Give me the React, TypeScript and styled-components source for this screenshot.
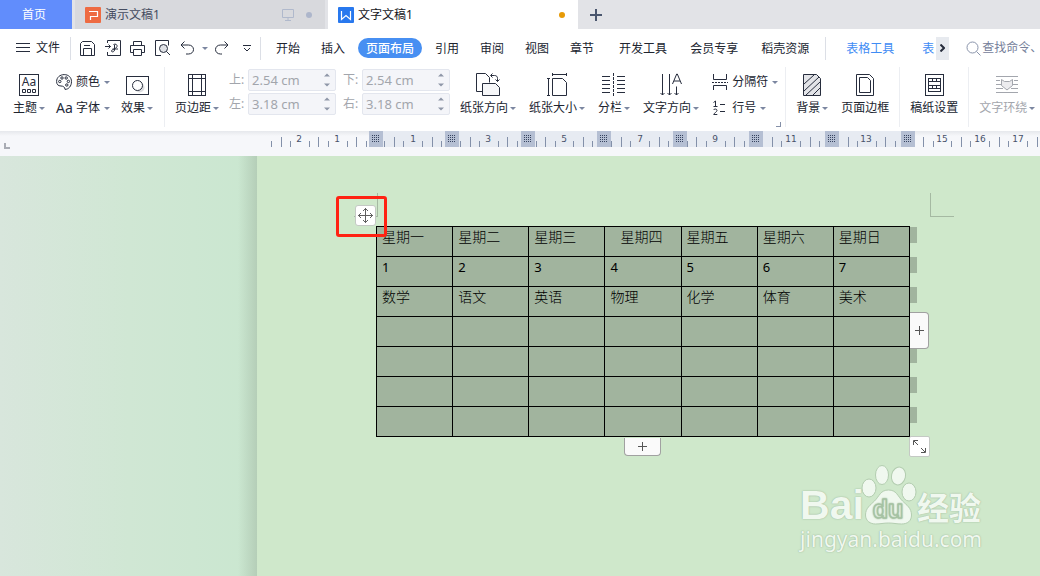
import React from "react";
import styled, { createGlobalStyle, css } from "styled-components";

const ink = "#272d3d";
const GlobalStyle = createGlobalStyle`
  * { box-sizing: border-box; }
  html, body, #root { height: 100%; }
  body {
    margin: 0;
    overflow: hidden;
    font: 12px/16px "Noto Sans", "Noto Sans CJK SC", sans-serif;
    color: #20242f;
    background: #cfe8cb;
  }
  button { border: 0; padding: 0; margin: 0; background: none; font: inherit; color: inherit; cursor: pointer; }
  svg { display: block; flex: none; }
`;

const Shell = styled.div`
  display: flex;
  flex-direction: column;
  min-height: 100%;
  overflow: hidden;
`;

/* ---------- tabs ---------- */
const TabBar = styled.header`
  display: flex;
  height: 29px;
  gap: 3px;
  background: #e2e3e7;
`;
const HomeTab = styled.button`
  width: 72px;
  flex: none;
  background: #618dfc;
  color: #fff;
  padding-right: 4px;
`;
const DocTab = styled.button<{ $active?: boolean }>`
  display: flex;
  align-items: center;
  gap: 4px;
  width: 250px;
  padding: 0 12px 0 10px;
  background: ${(p) => (p.$active ? "#fff" : "#d8d9dd")};
  color: ${(p) => (p.$active ? "#14161c" : "#454c60")};
`;
const TabTitle = styled.span`
  flex: 1;
  text-align: left;
`;
const Dot = styled.span<{ $color: string }>`
  width: 6px;
  height: 6px;
  margin-left: 8px;
  margin-right: 1px;
  border-radius: 50%;
  background: ${(p) => p.$color};
`;
const NewTab = styled.button`
  display: grid;
  place-items: center;
  width: 30px;
`;

/* ---------- menu ---------- */
const MenuBar = styled.nav`
  display: flex;
  align-items: center;
  height: 38px;
  background: #fff;
  white-space: nowrap;
`;
const FileButton = styled.button`
  display: flex;
  align-items: center;
  gap: 6px;
  width: 70px;
  flex: none;
  padding-left: 16px;
`;
const Bar = styled.span`
  flex: none;
  width: 1px;
  height: 23px;
  background: #dcdfe6;
`;
const QuickTools = styled.div`
  display: flex;
  flex: none;
  width: 189px;
  padding-left: 4px;
`;
const QuickButton = styled.button<{ $narrow?: boolean }>`
  display: grid;
  place-items: center;
  width: ${(p) => (p.$narrow ? "9px" : "25px")};
  height: 24px;
`;
const MenuGroup = styled.div<{ $gap: number; $left: number; $clip?: boolean }>`
  display: flex;
  flex: none;
  gap: ${(p) => p.$gap}px;
  margin-left: ${(p) => p.$left}px;
  ${(p) =>
    p.$clip &&
    css`
      width: 98px;
      overflow: hidden;
    `}
`;
const MenuItem = styled.button<{ $on?: boolean; $blue?: boolean }>`
  flex: none;
  height: 20px;
  padding: 1px 8px 0;
  border-radius: 10px;
  line-height: 19px;
  color: ${(p) => (p.$on ? "#fff" : p.$blue ? "#3f8cf4" : "#20242f")};
  background: ${(p) => (p.$on ? "#478ff2" : "none")};
  font-weight: ${(p) => (p.$on ? 500 : 400)};
`;
const ScrollNext = styled.button`
  display: grid;
  place-items: center;
  flex: none;
  width: 13px;
  height: 23px;
  background: #e7eaef;
`;
const Search = styled.label`
  display: flex;
  flex: 1;
  min-width: 0;
  align-items: center;
  margin-left: 17px;
  gap: 1px;
`;
const SearchInput = styled.input`
  flex: 1;
  min-width: 0;
  width: 20px;
  padding: 0;
  border: 0;
  outline: 0;
  font: inherit;
  background: none;
  &::placeholder { color: #75809a; opacity: 1; }
`;

/* ---------- ribbon ---------- */
const Ribbon = styled.section`
  display: flex;
  height: 64px;
  background: #fff;
  white-space: nowrap;
  overflow: hidden;
`;
const Group = styled.div<{ $gap?: number; $pad?: string }>`
  position: relative;
  display: flex;
  flex: none;
  height: 60px;
  gap: ${(p) => p.$gap ?? 13}px;
  padding: ${(p) => p.$pad ?? "0 10px"};
  border-right: 1px solid #eceef2;
`;
const Tool = styled.button<{ $dim?: boolean }>`
  display: flex;
  flex: none;
  flex-direction: column;
  align-items: center;
  height: 52px;
  padding-top: 3px;
  color: ${(p) => (p.$dim ? "#a3a6ad" : "inherit")};
`;
const ToolIcon = styled.span`
  display: grid;
  place-items: center;
  height: 30px;
`;
const ToolLabel = styled.span`
  display: flex;
  align-items: center;
  gap: 2px;
`;
const Caret = styled.span`
  width: 0;
  height: 0;
  border: solid transparent;
  border-width: 3px 3px 0;
  border-top-color: #7b86a0;
`;
const Stack = styled.div`
  display: flex;
  flex: none;
  flex-direction: column;
  padding-top: 2px;
`;
const SmallTool = styled.button`
  display: flex;
  align-items: center;
  height: 26px;
  gap: 4px;
`;
const SmallGlyph = styled.span`
  width: 16px;
  font-size: 14px;
  color: ${ink};
`;
const Margins = styled.div`
  display: grid;
  flex: none;
  grid-template-columns: auto auto;
  column-gap: 7px;
  row-gap: 2px;
  height: 48px;
  padding-top: 2px;
  margin: 0 -3px;
`;
const Field = styled.label`
  display: flex;
  align-items: center;
  gap: 4px;
  color: #a2a5ac;
`;
const FieldName = styled.span`
  width: 15px;
`;
const SpinBox = styled.span`
  display: flex;
  width: 88px;
  height: 22px;
  border: 1px solid #e3e6ee;
  border-radius: 2px;
  background: #f4f5f9;
`;
const SpinInput = styled.input`
  flex: 1;
  min-width: 0;
  padding: 0 0 0 3px;
  border: 0;
  outline: 0;
  background: none;
  color: #a2a5ac;
  font: 13px/20px "Noto Sans", sans-serif;
`;
const SpinArrows = styled.span`
  display: grid;
  place-items: center;
  width: 16px;
`;
const Launcher = styled.button`
  position: absolute;
  right: 4px;
  bottom: 0;
  width: 5px;
  height: 5px;
  border: solid #8590a8;
  border-width: 0 1px 1px 0;
`;

/* ---------- document ---------- */
const RulerBar = styled.div`
  height: 25px;
  background: linear-gradient(#e6e8ec, #f6f7fa 5px);
`;
const Workspace = styled.main`
  position: relative;
  display: flex;
  flex: 1;
  background: #cfe8cb;
`;
const Desk = styled.div`
  flex: none;
  width: 257px;
  background:
    linear-gradient(90deg, transparent 238px, #b5ceb8 257px),
    linear-gradient(90deg, #d8e6dc, #d0e7d4 50%, #cae7d0);
`;
const Sheet = styled.div`
  position: relative;
  flex: 1;
  padding: 70px 0 0 119px;
`;
const TableFrame = styled.div`
  position: relative;
  width: 534px;
`;
const Timetable = styled.table`
  width: 100%;
  table-layout: fixed;
  border-collapse: collapse;
  background: #a1b49e;
  color: #000;
  font: 300 14px/18px "Noto Sans CJK SC", sans-serif;
`;
const Cell = styled.td<{ $indent?: boolean }>`
  height: 30px;
  padding: 0 0 0 ${(p) => (p.$indent ? "15px" : "5px")};
  border: 1px solid #000;
  vertical-align: top;
`;
const Digit = styled.span`
  font: 13px/18px "Noto Sans", sans-serif;
`;
const RowEnds = styled.div`
  position: absolute;
  top: 1px;
  left: 100%;
  display: grid;
  gap: 14px;
`;
const RowEnd = styled.span`
  width: 7px;
  height: 16px;
  background: #a1b49e;
`;
const Corner = styled.span<{ $side: "left" | "right" }>`
  position: absolute;
  top: 37px;
  width: 24px;
  height: 24px;
  border: 0 solid #a5b9a2;
  border-bottom-width: 1px;
  ${(p) => (p.$side === "left" ? "left: 97px; border-right-width: 1px;" : "left: 673px; border-left-width: 1px;")}
`;
const Handle = styled.button<{ $at: "move" | "row" | "column" | "size" }>`
  position: absolute;
  display: grid;
  place-items: center;
  background: #fafafa;
  border: 1px solid #a1a1a1;
  ${(p) =>
    ({
      move: "left: -21px; top: -21px; width: 21px; height: 21px; background: #fff; border-color: #c4c9c4; border-radius: 3px;",
      size: "left: 533px; top: 210px; width: 21px; height: 21px; background: #fff; border-color: #c4c9c4; border-radius: 2px;",
      row: "left: 248px; top: 212px; width: 37px; height: 18px; border-top: 0; border-radius: 0 0 4px 4px;",
      column: "left: 534px; top: 86px; width: 19px; height: 37px; border-left: 0; border-radius: 0 4px 4px 0;",
    })[p.$at]}
`;
const RedFrame = styled.div`
  position: absolute;
  left: -40px;
  top: -30px;
  width: 51px;
  height: 41px;
  border: 3px solid #ff2213;
  border-radius: 3px;
  pointer-events: none;
`;
const Watermark = styled.div`
  position: absolute;
  right: 58px;
  bottom: 23px;
  display: flex;
  flex-direction: column;
  color: #f0f8ef;
  text-shadow: 0 0 1px #9fb99d, 0 0 2px #a9c4a7;
`;
const Brand = styled.div`
  display: flex;
  align-items: flex-end;
  height: 62px;
`;
const Bai = styled.span`
  width: 61px;
  font: bold 41px/40px "Liberation Sans", sans-serif;
`;
const Exp = styled.span`
  font: bold 32px/38px "Noto Sans CJK SC", sans-serif;
`;
const Address = styled.span`
  font: 21px/28px "Noto Sans", sans-serif;
`;

/* ---------- drawings ---------- */
type IconProps = { w: number; h: number; color?: string; sw?: number; children: React.ReactNode };
const Icon = ({ w, h, color = ink, sw = 1, children }: IconProps) => (
  <svg width={w} height={h} viewBox={`0 0 ${w} ${h}`} fill="none" stroke={color} strokeWidth={sw} aria-hidden="true">
    {children}
  </svg>
);

const ThemeIcon = () => (
  <Icon w={20} h={22}>
    <rect x=".5" y=".5" width="19" height="21" />
    <text x="10" y="12" textAnchor="middle" fontSize="12" fill={ink} stroke="none">
      Aa
    </text>
    <path d="M3.500 15.500h3v3h-3zM8.500 15.500h3v3h-3zM13.500 15.500h3v3h-3z" />
  </Icon>
);
const PaletteIcon = () => (
  <Icon w={16} h={16}>
    <path d="M9 15.400C9 13 7 12 5 12 2 12 .6 10.300.6 7.500.6 3.400 4 .6 8.200.6c4.400 0 7.300 2.900 7.300 7 0 4.400-2.800 7.800-6.500 7.800z" />
    <circle cx="3.800" cy="7.500" r="1.200" />
    <circle cx="6" cy="4" r="1.200" />
    <circle cx="10.200" cy="4" r="1.200" />
    <circle cx="12.400" cy="7.400" r="1.200" />
    <circle cx="10.800" cy="11" r="1.200" />
  </Icon>
);
const EffectIcon = () => (
  <Icon w={23} h={19}>
    <circle cx="13.500" cy="11.500" r="5" fill="#dcdde0" stroke="none" />
    <rect x=".5" y=".5" width="22" height="18" />
    <circle cx="11.500" cy="9.500" r="5" fill="#fff" />
  </Icon>
);
const MarginIcon = () => (
  <Icon w={18} h={22}>
    <rect x=".5" y=".5" width="17" height="21" />
    <path d="M4.500 0v22M13.500 0v22M0 4.500h18M0 17.500h18" />
  </Icon>
);
const OrientIcon = () => (
  <Icon w={24} h={24}>
    <path d="M6 18.500H.5V.5h9l4 4v5" />
    <path d="M6.500 10.500h13l4 4v8h-17z" fill="#f6f7f9" />
    <path d="M16.500.5 14.500 2.500l2 2M15 2.500h3.500c2 0 3 1 3 3v3M19.500 6.500l2 2 2-2" />
  </Icon>
);
const SizeIcon = () => (
  <Icon w={20} h={24}>
    <path d="M5.500 0v3M19.500 0v3M5.500 1.500h14M0 5.500h3M0 22.500h3M1.500 5.500v17" />
    <path d="M5.500 5.500h10l4 4v13h-14z" />
  </Icon>
);
const ColumnsIcon = () => (
  <Icon w={24} h={24}>
    <path d="M0 3.500h8M0 7.500h8M0 11.500h8M0 15.500h8M0 19.500h8M15 3.500h8M15 7.500h8M15 11.500h8M15 15.500h8M15 19.500h8" />
    <path d="M11.500 0v24" strokeDasharray="3 1" />
  </Icon>
);
const DirectionIcon = () => (
  <Icon w={22} h={24}>
    <path d="M2.500 1v21M.5 20l2 2 2-2M9.500 1v21M7.500 20l2 2 2-2M12.500 11 16.700 1h.6L21.500 11M14 8h6M16.500 13.500V22M14.500 20l2 2 2-2" />
  </Icon>
);
const BreakIcon = () => (
  <Icon w={16} h={16}>
    <path d="M1.500 0v5.500h13V0M1.500 16v-4.500h13V16" />
    <path d="M0 8.500h16" strokeDasharray="2 1" />
  </Icon>
);
const LineNoIcon = () => (
  <Icon w={16} h={16}>
    <path d="M1.500 2.500 3.500 1v5.500M1.500 6.500h4M1.500 10c.5-1.300 3.500-1.400 3.500.4 0 1.500-3 2.700-3.300 4.100h3.600M8 4.500h5M8 11.500h5" />
  </Icon>
);
const BackgroundIcon = () => (
  <Icon w={18} h={22}>
    <path d="M.5.5h13l4 4v17H.5z" fill="#e3e4e8" />
    <path d="M1 10 11 1M1 17 16 3M3 21 17 8M10 21l7-7" />
  </Icon>
);
const BorderIcon = () => (
  <Icon w={18} h={22}>
    <path d="M.5.5h13l4 4v17H.5z" />
    <path d="M3.500 3.500h8l3 3v12h-11z" />
  </Icon>
);
const GridPaperIcon = () => (
  <Icon w={19} h={22}>
    <rect x=".5" y=".5" width="18" height="21" />
    <rect x="3.500" y="4.500" width="12" height="13" />
    <path d="M3.500 7.500h12M3.500 11.500h12M3.500 14.500h12M7.500 4.500v3M11.500 4.500v3M7.500 11.500v3M11.500 11.500v3" />
  </Icon>
);
const WrapIcon = () => (
  <Icon w={22} h={18} color="#a3a6ad">
    <path d="M0 .5h22M0 16.500h22M0 4.500h4M18 4.500h4M0 8.500h5M17 8.500h5M0 12.500h7M15 12.500h7" />
    <path d="M5.500 3.500l3 2h5l3-2v6l-5.500 4.500-5.500-4.500z" fill="#ececef" />
  </Icon>
);
const SaveIcon = () => (
  <Icon w={15} h={15}>
    <path d="M.5 2.500v12h14V3.500l-3-3H2.500zM3.500 14.500v-7h8v7M4 4.500h6" />
  </Icon>
);
const PdfIcon = () => (
  <Icon w={16} h={16}>
    <path d="M2.500 3V.5h13v15h-13V12M0 6.500h5.500M3.500 4.500l2 2-2 2" />
    <path d="M8.500 4.500c2-1 4 0 3.500 2s-3 2.500-4.500 2.500M9.500 5v5c0 2-3 2.500-3 1s3-2 6.500-2" />
  </Icon>
);
const PrintIcon = () => (
  <Icon w={15} h={15}>
    <path d="M3.500 4V.5h8V4M3 11.500H.5v-7h14v7H12M3.500 8.500h8v6h-8z" />
  </Icon>
);
const PreviewIcon = () => (
  <Icon w={16} h={16}>
    <path d="M6 15.500H.5V.5h13v5" />
    <circle cx="8.500" cy="8.500" r="4" fill="#dfe1e6" />
    <path d="M11.500 11.500 15 15" />
  </Icon>
);
const UndoIcon = () => (
  <Icon w={15} h={14}>
    <path d="M4.500.5 1 4l3.500 3.500M1 4h7.500c3 0 5 2 5 4.500s-2 4.500-5 4.500H6" />
  </Icon>
);
const RedoIcon = () => (
  <Icon w={15} h={14}>
    <path d="M10.500.5 14 4l-3.500 3.500M14 4H6.500c-3 0-5 2-5 4.500s2 4.500 5 4.500H8" />
  </Icon>
);
const PlusIcon = ({ size, color, sw }: { size: number; color: string; sw?: number }) => (
  <Icon w={size} h={size} color={color} sw={sw}>
    <path d={`M0 ${size / 2}h${size}M${size / 2} 0v${size}`} />
  </Icon>
);
const MoveIcon = () => (
  <Icon w={15} h={15} color="#5f5f5f">
    <path d="M7.500 0v15M0 7.500h15M5 3 7.500.5 10 3M5 12l2.500 2.500L10 12M3 5 .5 7.500 3 10M12 5l2.500 2.500L12 10" />
  </Icon>
);
const ResizeIcon = () => (
  <Icon w={15} h={15} color="#555">
    <path d="M1.500 6V1.500H6M2 2l4 4M13.500 9v4.500H9M13 13 9 9" />
  </Icon>
);

/* ---------- ruler ---------- */
const UNIT = 37.8;
const ORIGIN = 375;
const markX = (n: number) => Math.round(ORIGIN + n * UNIT);
const quarters = Array.from({ length: 84 }, (_, i) => -2.75 + i * 0.25).filter((n) => !Number.isInteger(n));
const labels = [-2, -1, 1, 3, 5, 7, 9, 11, 13, 15, 16, 17];
const stops = Array.from({ length: 8 }, (_, i) => 369 + i * 76);

const Ruler = () => (
  <RulerBar>
    <svg width="100%" height="25" role="img" aria-label="标尺">
      <path d="M5 12v5H10" fill="none" stroke="#a9acb4" strokeWidth="2" />
      <rect x="383" y="0" width="518" height="16" fill="#e7ebf2" />
      {quarters.map((n) => {
        const tall = Number.isInteger(n * 2);
        return <rect key={n} x={markX(n)} y={tall ? 6 : 10} width="1" height={tall ? 10 : 6} fill="#8390a9" />;
      })}
      {stops.map((x) => (
        <g key={x}>
          <rect x={x} y="0" width="14" height="16" fill="#b5bfd3" />
          {[5, 7, 9, 11].map((y) => (
            <path key={y} d={`M${x + 3} ${y - 0.5}h8`} stroke="#36435f" strokeDasharray="1 1" />
          ))}
        </g>
      ))}
      {labels.map((n) => (
        <text key={n} x={markX(n)} y="11" textAnchor="middle" fontFamily="DejaVu Sans" fontSize="9" fill="#47526a">
          {Math.abs(n)}
        </text>
      ))}
    </svg>
  </RulerBar>
);

/* ---------- parts ---------- */
const BigTool = ({ icon, label, caret, dim }: { icon: React.ReactNode; label: string; caret?: boolean; dim?: boolean }) => (
  <Tool $dim={dim}>
    <ToolIcon>{icon}</ToolIcon>
    <ToolLabel>
      {label}
      {caret && <Caret />}
    </ToolLabel>
  </Tool>
);
const Spin = ({ name, value }: { name: string; value: string }) => (
  <Field>
    <FieldName>{name}:</FieldName>
    <SpinBox>
      <SpinInput defaultValue={value} />
      <SpinArrows>
        <svg width="6" height="14" fill="#8f97a8" aria-hidden="true">
          <path d="M0 3.500 3 .5l3 3zM0 10.500h6l-3 3z" />
        </svg>
      </SpinArrows>
    </SpinBox>
  </Field>
);

const rows: string[][] = [
  ["星期一", "星期二", "星期三", "星期四", "星期五", "星期六", "星期日"],
  ["1", "2", "3", "4", "5", "6", "7"],
  ["数学", "语文", "英语", "物理", "化学", "体育", "美术"],
  ...Array.from({ length: 4 }, () => Array(7).fill("")),
];

export default function App() {
  return (
    <Shell>
      <GlobalStyle />
      <TabBar>
        <HomeTab>首页</HomeTab>
        <DocTab>
          <svg width="16" height="16" aria-hidden="true">
            <rect width="16" height="16" rx="1" fill="#ee6b42" />
            <path d="M4 4.500h8.500v5H5.500V13" fill="none" stroke="#fff" strokeWidth="1.200" />
          </svg>
          <TabTitle>演示文稿1</TabTitle>
          <Icon w={12} h={12} color="#b0b9cc">
            <path d="M.5.5h11v8H.5zM6 8.500v3M3 11.500h6" />
          </Icon>
          <Dot $color="#adb6cb" />
        </DocTab>
        <DocTab $active>
          <svg width="16" height="16" aria-hidden="true">
            <rect width="16" height="16" rx="1" fill="#2878ee" />
            <path d="M3.500 4v8.500L8 8.500l4.500 4V4" fill="none" stroke="#fff" strokeWidth="1.200" />
          </svg>
          <TabTitle>文字文稿1</TabTitle>
          <Dot $color="#e79a07" />
        </DocTab>
        <NewTab aria-label="新建">
          <PlusIcon size={12} color="#4a566e" sw={2} />
        </NewTab>
      </TabBar>

      <MenuBar>
        <FileButton>
          <Icon w={14} h={10}>
            <path d="M0 .5h14M0 4.500h14M0 8.500h14" />
          </Icon>
          文件
        </FileButton>
        <Bar />
        <QuickTools>
          <QuickButton aria-label="保存"><SaveIcon /></QuickButton>
          <QuickButton aria-label="输出为PDF"><PdfIcon /></QuickButton>
          <QuickButton aria-label="打印"><PrintIcon /></QuickButton>
          <QuickButton aria-label="打印预览"><PreviewIcon /></QuickButton>
          <QuickButton aria-label="撤销"><UndoIcon /></QuickButton>
          <QuickButton $narrow aria-label="撤销列表"><Caret /></QuickButton>
          <QuickButton aria-label="恢复"><RedoIcon /></QuickButton>
          <QuickButton aria-label="自定义">
            <Icon w={8} h={7}>
              <path d="M0 .5h8M1 3l3 3 3-3" />
            </Icon>
          </QuickButton>
        </QuickTools>
        <Bar />
        <MenuGroup $gap={5} $left={7}>
          <MenuItem>开始</MenuItem>
          <MenuItem>插入</MenuItem>
          <MenuItem $on>页面布局</MenuItem>
          <MenuItem>引用</MenuItem>
          <MenuItem>审阅</MenuItem>
          <MenuItem>视图</MenuItem>
          <MenuItem>章节</MenuItem>
        </MenuGroup>
        <MenuGroup $gap={7} $left={9}>
          <MenuItem>开发工具</MenuItem>
          <MenuItem>会员专享</MenuItem>
          <MenuItem>稻壳资源</MenuItem>
        </MenuGroup>
        <MenuGroup $gap={12} $left={8}>
          <Bar />
        </MenuGroup>
        <MenuGroup $gap={12} $left={12} $clip>
          <MenuItem $blue>表格工具</MenuItem>
          <MenuItem $blue>表</MenuItem>
        </MenuGroup>
        <ScrollNext aria-label="更多选项卡">
          <Icon w={5} h={8} sw={2}>
            <path d="M.5.5 4 4 .5 7.500" />
          </Icon>
        </ScrollNext>
        <Search>
          <Icon w={15} h={15} color="#8a94ab">
            <circle cx="6.500" cy="6.500" r="5.500" />
            <path d="M10.500 10.500 14.500 14.500" />
          </Icon>
          <SearchInput placeholder="查找命令、搜索模板" aria-label="查找命令" />
        </Search>
      </MenuBar>

      <Ribbon>
        <Group $gap={11} $pad="0 11px 0 13px">
          <BigTool icon={<ThemeIcon />} label="主题" caret />
          <Stack>
            <SmallTool><PaletteIcon />颜色<Caret /></SmallTool>
            <SmallTool><SmallGlyph>Aa</SmallGlyph>字体<Caret /></SmallTool>
          </Stack>
          <BigTool icon={<EffectIcon />} label="效果" caret />
        </Group>
        <Group $pad="0 7px 0 10px">
          <BigTool icon={<MarginIcon />} label="页边距" caret />
          <Margins>
            <Spin name="上" value="2.54 cm" />
            <Spin name="下" value="2.54 cm" />
            <Spin name="左" value="3.18 cm" />
            <Spin name="右" value="3.18 cm" />
          </Margins>
          <BigTool icon={<OrientIcon />} label="纸张方向" caret />
          <BigTool icon={<SizeIcon />} label="纸张大小" caret />
          <BigTool icon={<ColumnsIcon />} label="分栏" caret />
          <BigTool icon={<DirectionIcon />} label="文字方向" caret />
          <Stack>
            <SmallTool><BreakIcon />分隔符<Caret /></SmallTool>
            <SmallTool><LineNoIcon />行号<Caret /></SmallTool>
          </Stack>
          <Launcher aria-label="页面设置" />
        </Group>
        <Group>
          <BigTool icon={<BackgroundIcon />} label="背景" caret />
          <BigTool icon={<BorderIcon />} label="页面边框" />
        </Group>
        <Group>
          <BigTool icon={<GridPaperIcon />} label="稿纸设置" />
        </Group>
        <Group>
          <BigTool icon={<WrapIcon />} label="文字环绕" caret dim />
        </Group>
      </Ribbon>

      <Ruler />

      <Workspace>
        <Desk />
        <Sheet>
          <Corner $side="left" />
          <Corner $side="right" />
          <TableFrame>
            <Timetable>
              <tbody>
                {rows.map((row, r) => (
                  <tr key={r}>
                    {row.map((text, c) => (
                      <Cell key={c} $indent={r === 0 && c === 3}>
                        {r === 1 ? <Digit>{text}</Digit> : text}
                      </Cell>
                    ))}
                  </tr>
                ))}
              </tbody>
            </Timetable>
            <RowEnds>
              {rows.map((_, r) => (
                <RowEnd key={r} />
              ))}
            </RowEnds>
            <Handle $at="move" aria-label="移动表格"><MoveIcon /></Handle>
            <Handle $at="column" aria-label="添加列"><PlusIcon size={9} color="#555" /></Handle>
            <Handle $at="row" aria-label="添加行"><PlusIcon size={9} color="#555" /></Handle>
            <Handle $at="size" aria-label="调整大小"><ResizeIcon /></Handle>
            <RedFrame />
          </TableFrame>
        </Sheet>
        <Watermark>
          <Brand>
            <Bai>Bai</Bai>
            <svg width="56" height="62" viewBox="0 0 56 62" fill="#f0f8ef" stroke="#b3cdb0" aria-hidden="true">
              <ellipse cx="8" cy="25" rx="7" ry="9" />
              <ellipse cx="21" cy="12" rx="6.500" ry="9.500" />
              <ellipse cx="37.500" cy="13" rx="7" ry="9" transform="rotate(12 37.500 13)" />
              <ellipse cx="48" cy="29" rx="7" ry="9" />
              <path d="M27.500 27c-8 0-9 6-14 11-4 4-9 7-9 14 0 6 5 9 10 9 5 0 8-1 13-1s8 1 13 1c6 0 10-3 10-9 0-7-5-10-9-14-5-5-6-11-14-11z" />
              <text x="27" y="55" textAnchor="middle" fontFamily="Liberation Sans" fontWeight="bold" fontSize="25" stroke="#a5c3a2">
                du
              </text>
            </svg>
            <Exp>经验</Exp>
          </Brand>
          <Address>jingyan.baidu.com</Address>
        </Watermark>
      </Workspace>
    </Shell>
  );
}
